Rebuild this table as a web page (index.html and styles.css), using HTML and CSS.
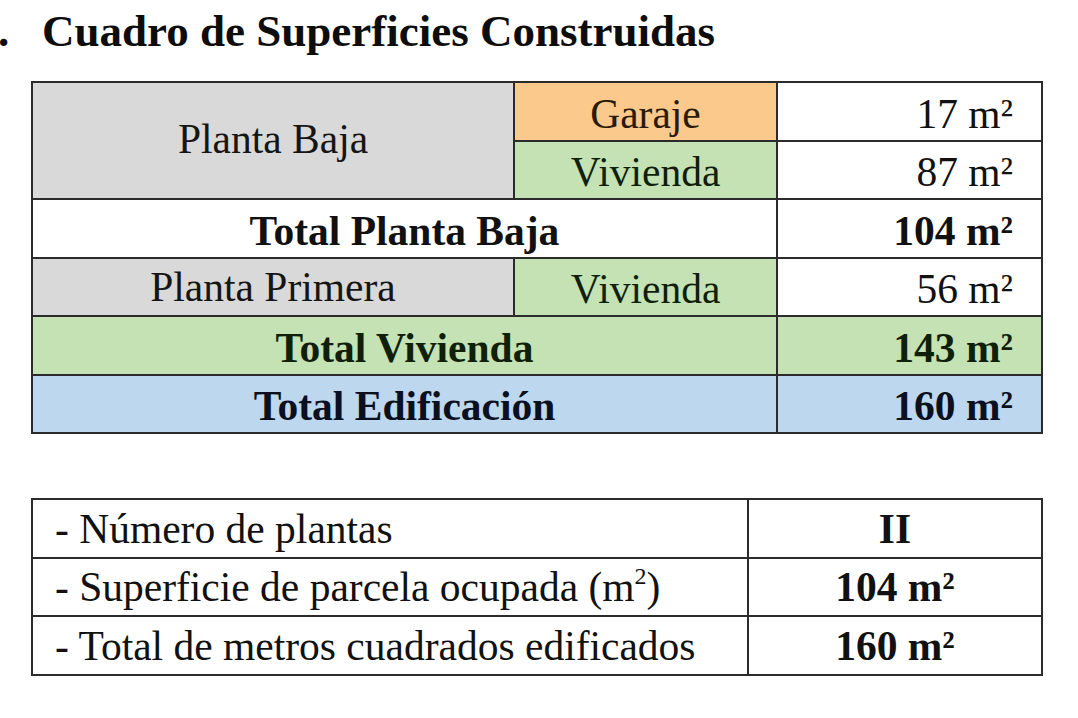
FILE: index.html
```html
<!DOCTYPE html>
<html lang="es">
<head>
<meta charset="utf-8">
<title>Cuadro de Superficies Construidas</title>
<link rel="stylesheet" href="styles.css">
</head>
<body>
<div class="page">
  <h1 class="title"><span class="num">.</span><span>Cuadro de Superficies Construidas</span></h1>

  <table class="sup">
    <colgroup>
      <col class="c1"><col class="c2"><col class="c3">
    </colgroup>
    <tbody>
      <tr>
        <td class="gray" rowspan="2">Planta Baja</td>
        <td class="orange center">Garaje</td>
        <td class="num-cell">17 m²</td>
      </tr>
      <tr>
        <td class="green center">Vivienda</td>
        <td class="num-cell">87 m²</td>
      </tr>
      <tr class="bold">
        <td class="center" colspan="2">Total Planta Baja</td>
        <td class="num-cell">104 m²</td>
      </tr>
      <tr>
        <td class="gray">Planta Primera</td>
        <td class="green center">Vivienda</td>
        <td class="num-cell">56 m²</td>
      </tr>
      <tr class="bold green">
        <td class="center" colspan="2">Total Vivienda</td>
        <td class="num-cell">143 m²</td>
      </tr>
      <tr class="bold blue">
        <td class="center" colspan="2">Total Edificación</td>
        <td class="num-cell">160 m²</td>
      </tr>
    </tbody>
  </table>

  <table class="info">
    <colgroup>
      <col class="i1"><col class="i2">
    </colgroup>
    <tbody>
      <tr>
        <td class="label">- Número de plantas</td>
        <td class="val">II</td>
      </tr>
      <tr>
        <td class="label">- Superficie de parcela ocupada (m<sup>2</sup>)</td>
        <td class="val">104 m²</td>
      </tr>
      <tr>
        <td class="label">- Total de metros cuadrados edificados</td>
        <td class="val">160 m²</td>
      </tr>
    </tbody>
  </table>
</div>
</body>
</html>
```

FILE: styles.css
```css
html, body {
  margin: 0;
  padding: 0;
  background: #ffffff;
}

body {
  font-family: "Liberation Serif", "Times New Roman", serif;
  color: #111111;
  width: 1078px;
  height: 718px;
  overflow: hidden;
}

.page {
  padding: 0 0 0 31px;
}

.title {
  display: flex;
  align-items: baseline;
  margin: 0 0 0 -33px;
  padding-top: 9px;
  font-size: 45px;
  line-height: 45px;
  font-weight: bold;
  color: #0d0d0d;
  height: 81px;
  box-sizing: border-box;
}

.title .num {
  width: 44px;
  flex: none;
}

table {
  border-collapse: collapse;
  table-layout: fixed;
  font-size: 41.5px;
}

td {
  border: 2px solid #2b2b2b;
  padding: 5px 0 0 0;
  height: 51.5px;
  line-height: 40px;
  white-space: nowrap;
}

.sup {
  width: 1010px;
}

.sup .c1 { width: 482px; }
.sup .c2 { width: 263px; }
.sup .c3 { width: 265px; }

.sup td.gray {
  background: #d9d9d9;
  text-align: center;
  color: #151515;
  padding-top: 0;
}

.sup td.gray[rowspan] {
  padding-bottom: 4px;
}

.sup td.orange {
  background: #fbc98c;
  color: #2a1a08;
}

.sup td.green,
.sup tr.green td {
  background: #c4e2b3;
  color: #0f1f0a;
}

.sup tr.blue td {
  background: #bdd7ee;
  color: #0a1020;
}

.center {
  text-align: center;
}

.num-cell {
  text-align: right;
  padding-right: 28px;
}

.bold td {
  font-weight: bold;
}

.info {
  margin-top: 64px;
  width: 1010px;
}

.info .i1 { width: 716px; }
.info .i2 { width: 294px; }

.info td {
  height: 51.5px;
  padding-top: 3px;
  padding-bottom: 2px;
}

.info .label {
  padding-left: 22px;
}

.info .val {
  text-align: center;
  font-weight: bold;
}

sup {
  font-size: 24px;
  line-height: 0;
  vertical-align: 17px;
}
```
